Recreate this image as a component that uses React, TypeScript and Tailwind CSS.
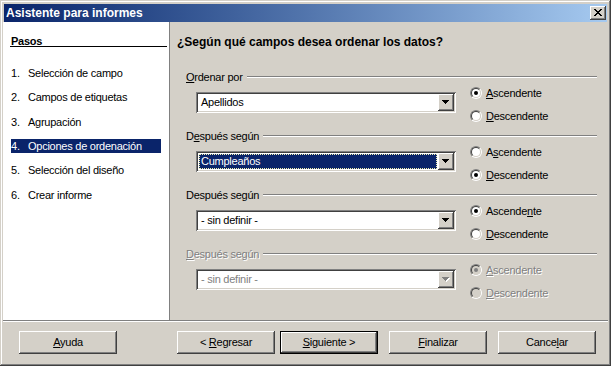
import React from 'react';

const raised =
  'shadow-[inset_-1px_-1px_#404040,inset_1px_1px_#fff,inset_-2px_-2px_#808080]';
const dis = 'text-[#808080] [text-shadow:1px_1px_0_#fff]';

const Arrow = ({ disabled }: { disabled?: boolean }) => (
  <svg width="8" height="5" shapeRendering="crispEdges">
    {disabled && (
      <path d="M1 1h7v1H1zM2 2h5v1H2zM3 3h3v1H3zM4 4h1v1H4z" fill="#fff" />
    )}
    <path
      d="M0 0h7v1H0zM1 1h5v1H1zM2 2h3v1H2zM3 3h1v1H3z"
      fill={disabled ? '#808080' : '#000'}
    />
  </svg>
);

const Radio = ({ checked, disabled }: { checked?: boolean; disabled?: boolean }) => (
  <span className="w-3 h-3 rounded-full border border-t-[#808080] border-l-[#808080] border-r-white border-b-white flex shrink-0">
    <span
      className={`flex-1 rounded-full border border-t-[#404040] border-l-[#404040] border-r-[#d4d0c8] border-b-[#d4d0c8] flex items-center justify-center ${
        disabled ? 'bg-[#d4d0c8]' : 'bg-white'
      }`}
    >
      {checked && (
        <span className={`w-1 h-1 rounded-full ${disabled ? 'bg-[#808080]' : 'bg-black'}`} />
      )}
    </span>
  </span>
);

const Combo = ({
  value,
  selected,
  disabled,
}: {
  value: string;
  selected?: boolean;
  disabled?: boolean;
}) => (
  <div className="w-[260px] h-[21px] p-[2px] flex bg-white shadow-[inset_1px_1px_#808080,inset_-1px_-1px_#fff,inset_2px_2px_#404040,inset_-2px_-2px_#d4d0c8]">
    <div className="flex-1 flex p-[1px]">
      {selected ? (
        <div className="flex-1 flex items-center pl-[1px] bg-[#0a246a] text-white border border-dotted border-[#f0f0b0]">
          {value}
        </div>
      ) : (
        <div className={`flex-1 flex items-center pl-[2px] ${disabled ? 'text-[#808080]' : ''}`}>
          {value}
        </div>
      )}
    </div>
    <div className={`w-4 bg-[#d4d0c8] flex items-center justify-center ${raised}`}>
      <Arrow disabled={disabled} />
    </div>
  </div>
);

type Group = {
  label: React.ReactNode;
  value: string;
  asc: React.ReactNode;
  desc: React.ReactNode;
  checked: 'asc' | 'desc';
  selected?: boolean;
  disabled?: boolean;
};

const groups: Group[] = [
  {
    label: (
      <>
        <u>O</u>rdenar por
      </>
    ),
    value: 'Apellidos',
    asc: (
      <>
        <u>A</u>scendente
      </>
    ),
    desc: (
      <>
        <u>D</u>escendente
      </>
    ),
    checked: 'asc',
  },
  {
    label: (
      <>
        D<u>e</u>spués según
      </>
    ),
    value: 'Cumpleaños',
    asc: (
      <>
        A<u>s</u>cendente
      </>
    ),
    desc: (
      <>
        <u>D</u>escendente
      </>
    ),
    checked: 'desc',
    selected: true,
  },
  {
    label: (
      <>
        Después se<u>g</u>ún
      </>
    ),
    value: '- sin definir -',
    asc: (
      <>
        Ascende<u>n</u>te
      </>
    ),
    desc: (
      <>
        <u>D</u>escendente
      </>
    ),
    checked: 'asc',
  },
  {
    label: (
      <>
        <u>D</u>espués según
      </>
    ),
    value: '- sin definir -',
    asc: (
      <>
        <u>A</u>scendente
      </>
    ),
    desc: (
      <>
        <u>D</u>escendente
      </>
    ),
    checked: 'asc',
    disabled: true,
  },
];

const steps = [
  'Selección de campo',
  'Campos de etiquetas',
  'Agrupación',
  'Opciones de ordenación',
  'Selección del diseño',
  'Crear informe',
];

const Btn = ({ children, def }: { children: React.ReactNode; def?: boolean }) =>
  def ? (
    <div className="w-[98px] h-[23px] border border-black flex">
      <div className={`flex-1 flex items-center justify-center ${raised}`}>{children}</div>
    </div>
  ) : (
    <div className={`w-[98px] h-[23px] flex items-center justify-center ${raised}`}>{children}</div>
  );

export default function App() {
  return (
    <div className="w-[611px] h-[366px] p-[3px] flex flex-col bg-[#d4d0c8] text-black text-[11px] tracking-[-0.25px] font-['Liberation_Sans',Arial,sans-serif] shadow-[inset_-1px_-1px_#404040,inset_1px_1px_#d4d0c8,inset_-2px_-2px_#808080,inset_2px_2px_#fff] select-none">
      {/* title bar */}
      <div className="h-[18px] mt-[1px] mx-[1px] flex items-center pl-[2px] pr-[1px] bg-linear-to-r from-[#0a246a] to-[#a6caf0]">
        <span className="text-white font-bold text-[12px] tracking-normal">Asistente para informes</span>
        <div className={`ml-auto w-4 h-[14px] bg-[#d4d0c8] flex items-center justify-center ${raised}`}>
          <svg width="8" height="7" shapeRendering="crispEdges" className="-mt-[1px]">
            <path
              d="M0 0h2v1H0zM6 0h2v1H6zM1 1h2v1H1zM5 1h2v1H5zM2 2h4v1H2zM3 3h2v1H3zM2 4h4v1H2zM1 5h2v1H1zM5 5h2v1H5zM0 6h2v1H0zM6 6h2v1H6z"
              fill="#000"
            />
          </svg>
        </div>
      </div>

      {/* body */}
      <div className="h-[298px] flex">
        <div className="w-[167px] bg-white border-r border-[#808080] pl-[7px] pr-[2px] pt-[12px]">
          <div className="h-[13px] leading-[15px] border-b border-black pl-[1px] font-bold">Pasos</div>
          <div className="mt-[19px] flex flex-col gap-[10.4px]">
            {steps.map((s, i) => (
              <div
                key={s}
                className={`ml-[1px] w-[150px] h-[14px] flex items-center ${
                  i === 3 ? 'bg-[#0a246a] text-white' : ''
                }`}
              >
                <span className="w-[17px]">{i + 1}.</span>
                <span>{s}</span>
              </div>
            ))}
          </div>
        </div>

        <div className="flex-1 pl-[7px] pr-[11px] pt-[13px]">
          <div className="h-[14px] flex items-center font-bold text-[12px] tracking-normal">
            ¿Según qué campos desea ordenar los datos?
          </div>
          <div className="ml-[9px] mt-[21px] flex flex-col gap-[6px]">
            {groups.map((g, i) => (
              <div key={i}>
                <div className="h-[14px] flex items-center">
                  <span className={g.disabled ? dis : ''}>{g.label}</span>
                  <div className="flex-1 ml-[4px] h-[2px] border-t border-t-[#808080] border-b border-b-white" />
                </div>
                <div className="mt-[2px] ml-[10px] flex">
                  <div className="mt-[6px]">
                    <Combo value={g.value} selected={g.selected} disabled={g.disabled} />
                  </div>
                  <div className="ml-[14px] flex flex-col gap-[9px]">
                    <div className="h-[14px] flex items-center gap-[4px]">
                      <Radio checked={g.checked === 'asc'} disabled={g.disabled} />
                      <span className={g.disabled ? dis : ''}>{g.asc}</span>
                    </div>
                    <div className="h-[14px] flex items-center gap-[4px]">
                      <Radio checked={g.checked === 'desc'} disabled={g.disabled} />
                      <span className={g.disabled ? dis : ''}>{g.desc}</span>
                    </div>
                  </div>
                </div>
              </div>
            ))}
          </div>
        </div>
      </div>

      {/* separator */}
      <div className="h-[2px] border-t border-t-[#808080] border-b border-b-white" />

      {/* buttons */}
      <div className="h-[41px] pt-[9px] pl-[16px] flex items-start">
        <Btn>
          <span>
            <u>A</u>yuda
          </span>
        </Btn>
        <div className="ml-[60px]">
          <Btn>
            <span>
              &lt; <u>R</u>egresar
            </span>
          </Btn>
        </div>
        <div className="ml-[5px]">
          <Btn def>
            <span>
              <u>S</u>iguiente &gt;
            </span>
          </Btn>
        </div>
        <div className="ml-[11px]">
          <Btn>
            <span>
              <u>F</u>inalizar
            </span>
          </Btn>
        </div>
        <div className="ml-[11px]">
          <Btn>
            <span>
              Cance<u>l</u>ar
            </span>
          </Btn>
        </div>
      </div>
    </div>
  );
}
